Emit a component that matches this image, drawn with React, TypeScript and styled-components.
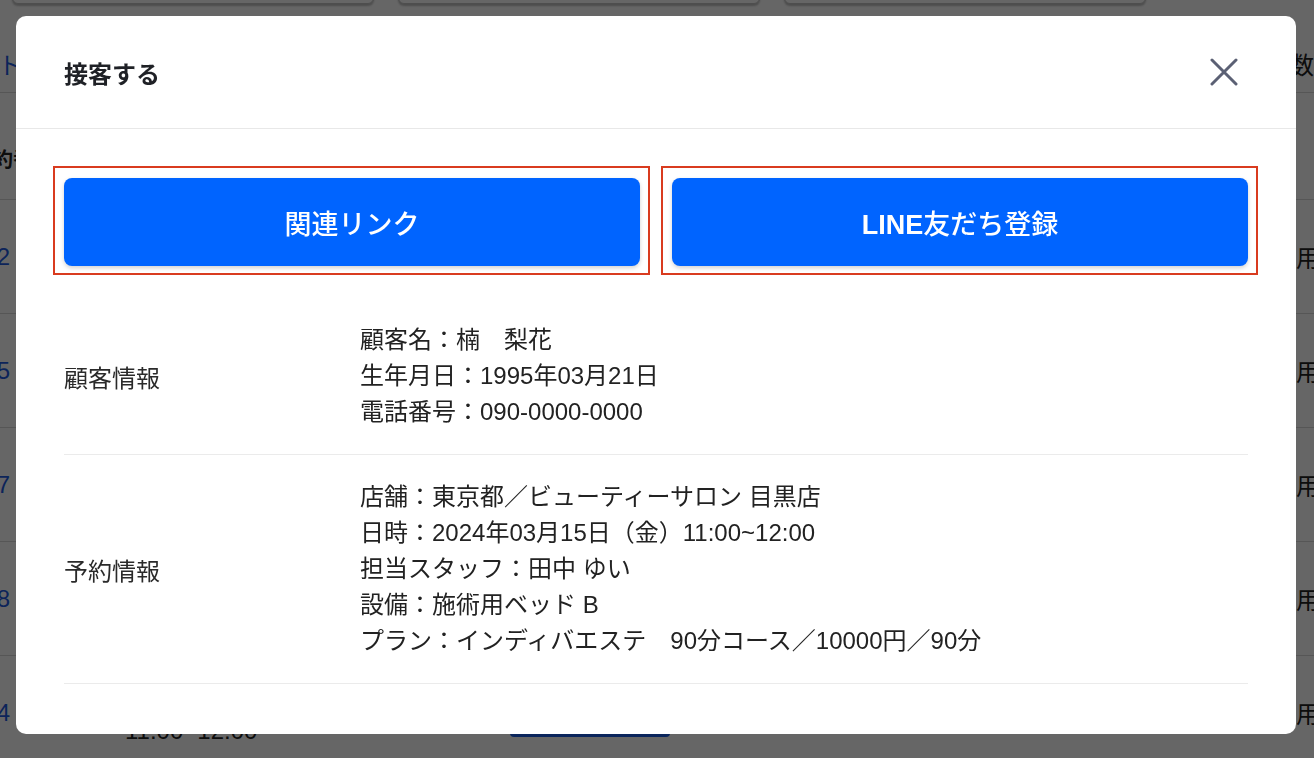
import styled, { createGlobalStyle } from "styled-components"

const GlobalStyle = createGlobalStyle`
    html, body {
        margin: 0;
        padding: 0;
    }
    body {
        font-family: "Liberation Sans", "Noto Sans CJK JP", sans-serif;
        background: #fff;
        color: #222;
        overflow: hidden;
    }
`

const reservations = [
    { no: "1002", date: "2024/03/15", time: "10:00~11:00" },
    { no: "1005", date: "2024/03/15", time: "10:30~11:30" },
    { no: "1007", date: "2024/03/15", time: "11:00~12:00" },
    { no: "1008", date: "2024/03/15", time: "11:00~12:00" },
    { no: "1004", date: "2024/03/15", time: "11:00~12:00" }
]

const customer = ["顧客名：楠　梨花", "生年月日：1995年03月21日", "電話番号：090-0000-0000"]

const booking = [
    "店舗：東京都／ビューティーサロン 目黒店",
    "日時：2024年03月15日（金）11:00~12:00",
    "担当スタッフ：田中 ゆい",
    "設備：施術用ベッド B",
    "プラン：インディバエステ　90分コース／10000円／90分"
]

export default function App() {
    return (
        <>
            <GlobalStyle />
            <Page>
                <FilterBar>
                    <FilterInput />
                    <FilterInput />
                    <FilterInput />
                </FilterBar>
                <TabRow>
                    <TabLink>予約リスト</TabLink>
                    <Count>表示件数</Count>
                </TabRow>
                <HeadRow>
                    <HeadCell>予約番号</HeadCell>
                </HeadRow>
                {reservations.map((r, i) => (
                    <Row key={i}>
                        <NumberCell>{r.no}</NumberCell>
                        <span />
                        <DateCell>
                            <div>{r.date}</div>
                            <div>{r.time}</div>
                        </DateCell>
                        <RowButton>詳細</RowButton>
                        <span />
                        <StatusCell>利用イ</StatusCell>
                    </Row>
                ))}
            </Page>

            <Overlay>
                <Modal>
                    <ModalHeader>
                        <Title>接客する</Title>
                        <CloseButton aria-label="閉じる">
                            <svg width="28" height="28" viewBox="0 0 28 28" fill="none">
                                <path
                                    d="M2 2L26 26M26 2L2 26"
                                    stroke="#5b6074"
                                    strokeWidth="3"
                                    strokeLinecap="round"
                                />
                            </svg>
                        </CloseButton>
                    </ModalHeader>
                    <ModalBody>
                        <ButtonRow>
                            <ActionButton>関連リンク</ActionButton>
                            <ActionButton>
                                <Latin>LINE</Latin>友だち登録
                            </ActionButton>
                        </ButtonRow>
                        <InfoList>
                            <InfoRow>
                                <InfoLabel>顧客情報</InfoLabel>
                                <InfoValue>
                                    {customer.map((line) => (
                                        <div key={line}>{line}</div>
                                    ))}
                                </InfoValue>
                            </InfoRow>
                            <InfoRow>
                                <InfoLabel>予約情報</InfoLabel>
                                <InfoValue>
                                    {booking.map((line) => (
                                        <div key={line}>{line}</div>
                                    ))}
                                </InfoValue>
                            </InfoRow>
                        </InfoList>
                    </ModalBody>
                </Modal>
            </Overlay>
        </>
    )
}

/* background page (behind the dimmed overlay) */

const Page = styled.div`
    width: 1314px;
    height: 758px;
    overflow: hidden;
    font-size: 24px;
`

const FilterBar = styled.div`
    display: flex;
    gap: 24px;
    padding-left: 12px;
    margin-top: -46px;
`

const FilterInput = styled.div`
    width: 360px;
    height: 48px;
    background: #fff;
    border: 1px solid #c4c4c4;
    border-radius: 6px;
    box-shadow: 0 2px 2px rgba(0, 0, 0, 0.25);
`

const TabRow = styled.div`
    box-sizing: border-box;
    display: flex;
    justify-content: space-between;
    align-items: center;
    height: 89px;
    padding-top: 30px;
    border-bottom: 1px solid #d8d8d8;
    white-space: nowrap;
`

const TabLink = styled.span`
    margin-left: -98px;
    color: #1f5be0;
`

const Count = styled.span`
    color: #222;
`

const HeadRow = styled.div`
    box-sizing: border-box;
    display: flex;
    align-items: center;
    height: 107px;
    padding-top: 24px;
    border-bottom: 1px solid #d8d8d8;
`

const HeadCell = styled.span`
    margin-left: -27px;
    font-size: 20px;
    font-weight: 700;
    color: #222;
`

const Row = styled.div`
    display: grid;
    grid-template-columns: 10px 115px 385px 160px 602px 200px;
    align-items: center;
    height: 113px;
    border-bottom: 1px solid #d8d8d8;
    white-space: nowrap;
`

const NumberCell = styled.div`
    display: flex;
    justify-content: flex-end;
    color: #1f5be0;
`

const DateCell = styled.div`
    line-height: 36px;
    color: #222;
`

const RowButton = styled.div`
    height: 48px;
    display: flex;
    align-items: center;
    justify-content: center;
    background: #1a5ce6;
    color: #fff;
    border-radius: 4px;
`

const StatusCell = styled.div`
    color: #222;
`

/* modal */

const Overlay = styled.div`
    position: fixed;
    inset: 0;
    background: rgba(0, 0, 0, 0.6);
    padding: 16px;
`

const Modal = styled.div`
    width: 1280px;
    height: 718px;
    background: #fff;
    border-radius: 10px;
    overflow: hidden;
    display: flex;
    flex-direction: column;
`

const ModalHeader = styled.header`
    box-sizing: border-box;
    height: 113px;
    flex-shrink: 0;
    display: flex;
    align-items: center;
    justify-content: space-between;
    padding: 0 58px 0 48px;
    border-bottom: 1px solid #e8e8e8;
`

const Title = styled.h2`
    margin: 0;
    font-size: 24px;
    font-weight: 700;
    color: #1f2126;
`

const CloseButton = styled.button`
    width: 28px;
    height: 28px;
    padding: 0;
    border: none;
    background: none;
    display: flex;
    cursor: pointer;
`

const ModalBody = styled.div`
    padding: 49px 48px 0;
    overflow: hidden;
`

const ButtonRow = styled.div`
    display: grid;
    grid-template-columns: 1fr 1fr;
    gap: 32px;
`

const ActionButton = styled.button`
    position: relative;
    height: 88px;
    border: none;
    border-radius: 8px;
    background: #0064ff;
    color: #fff;
    font-family: inherit;
    font-size: 27px;
    font-weight: 500;
    box-shadow: 0 2px 4px rgba(0, 0, 0, 0.18);
    cursor: pointer;

    &::after {
        content: "";
        position: absolute;
        inset: -12px -10px -9px -11px;
        border: 2px solid #d93b1f;
        pointer-events: none;
    }
`

const Latin = styled.span`
    font-weight: 700;
`

const InfoList = styled.div`
    margin-top: 32px;
`

const InfoRow = styled.div`
    display: grid;
    grid-template-columns: 296px 1fr;
    align-items: center;
    padding: 24px 0;
    border-bottom: 1px solid #ebebeb;
`

const InfoLabel = styled.div`
    font-size: 24px;
    color: #2a2a2a;
`

const InfoValue = styled.div`
    font-size: 24px;
    line-height: 36px;
    color: #222;
`
